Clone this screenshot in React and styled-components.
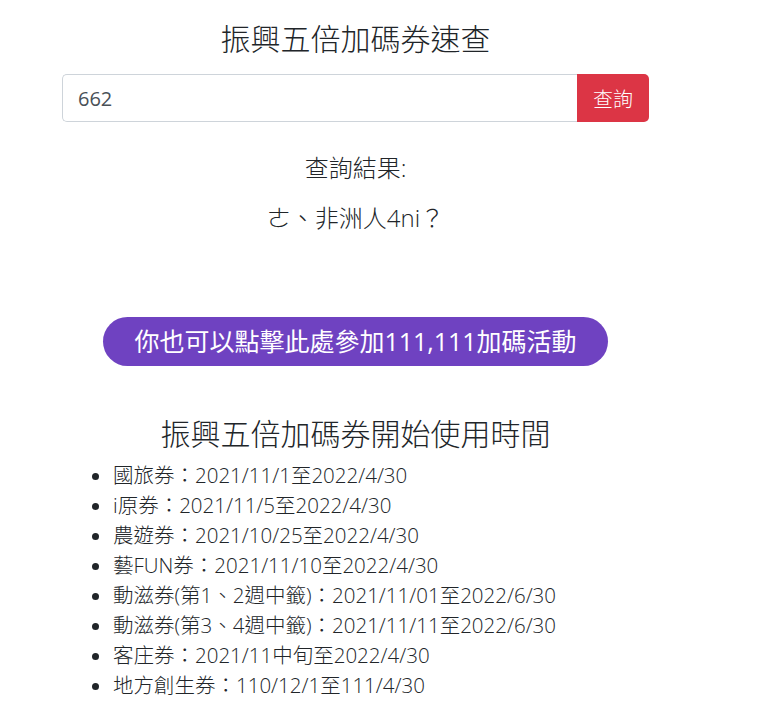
import React, { useState } from 'react';
import styled, { createGlobalStyle } from 'styled-components';

const GlobalStyle = createGlobalStyle`
  html, body {
    margin: 0;
    padding: 0;
    background: #fff;
  }
  body {
    font-family: 'Open Sans', 'Noto Sans CJK TC', sans-serif;
    color: #212529;
  }
`;

const Page = styled.div`
  width: 587px;
  margin-left: 62px;
  padding-top: 19px;
  display: flex;
  flex-direction: column;
`;

const Title = styled.h3`
  margin: 0;
  font-size: 30px;
  font-weight: 300;
  line-height: 36px;
  text-align: center;
  font-family: 'Noto Sans CJK TC', sans-serif;
`;

const SearchGroup = styled.div`
  display: flex;
  margin-top: 19px;
  height: 48px;
`;

const SearchInput = styled.input`
  flex: 1;
  min-width: 0;
  box-sizing: border-box;
  height: 48px;
  padding: 0 15px;
  font-size: 20px;
  font-family: 'Open Sans', sans-serif;
  color: #495057;
  border: 1px solid #ced4da;
  border-right: none;
  border-radius: 5px 0 0 5px;
  outline: none;
`;

const SearchButton = styled.button`
  width: 72px;
  height: 48px;
  border: none;
  border-radius: 0 5px 5px 0;
  background: #dc3545;
  color: #fff;
  font-size: 20px;
  font-family: 'Noto Sans CJK TC', sans-serif;
  font-weight: 300;
  cursor: pointer;
`;

const ResultLine = styled.p`
  margin: ${({ $gap }) => $gap}px 0 0;
  font-size: 24px;
  line-height: 36px;
  font-weight: 300;
  text-align: center;
  font-family: 'Open Sans', 'Noto Sans CJK TC', sans-serif;
`;

const PromoRow = styled.div`
  display: flex;
  justify-content: center;
  margin-top: 81px;
`;

const PromoButton = styled.a`
  display: inline-block;
  box-sizing: border-box;
  width: 505px;
  height: 49px;
  line-height: 49px;
  border-radius: 25px;
  background: #6f42c1;
  color: #fff;
  font-size: 25px;
  text-align: center;
  text-decoration: none;
  font-family: 'Open Sans', 'Noto Sans CJK TC', sans-serif;
  white-space: nowrap;
  cursor: pointer;
`;

const SectionTitle = styled.h3`
  margin: 48px 0 0;
  font-size: 30px;
  font-weight: 300;
  line-height: 36px;
  text-align: center;
  font-family: 'Noto Sans CJK TC', sans-serif;
`;

const DateList = styled.ul`
  margin: 10px 0 0;
  padding-left: 51px;
  list-style: disc;
`;

const DateItem = styled.li`
  font-size: 20.5px;
  line-height: 30px;
  font-weight: 300;
  font-family: 'Open Sans', 'Noto Sans CJK TC', sans-serif;
`;

const schedule = [
  '國旅券：2021/11/1至2022/4/30',
  'i原券：2021/11/5至2022/4/30',
  '農遊券：2021/10/25至2022/4/30',
  '藝FUN券：2021/11/10至2022/4/30',
  '動滋券(第1、2週中籤)：2021/11/01至2022/6/30',
  '動滋券(第3、4週中籤)：2021/11/11至2022/6/30',
  '客庄券：2021/11中旬至2022/4/30',
  '地方創生券：110/12/1至111/4/30',
];

export default function App() {
  const [code, setCode] = useState('662');

  return (
    <>
      <GlobalStyle />
      <Page>
        <Title>振興五倍加碼券速查</Title>
        <SearchGroup>
          <SearchInput value={code} onChange={(e) => setCode(e.target.value)} />
          <SearchButton>查詢</SearchButton>
        </SearchGroup>
        <ResultLine $gap={28}>查詢結果:</ResultLine>
        <ResultLine $gap={14}>ㄜ、非洲人4ni？</ResultLine>
        <PromoRow>
          <PromoButton>你也可以點擊此處參加111,111加碼活動</PromoButton>
        </PromoRow>
        <SectionTitle>振興五倍加碼券開始使用時間</SectionTitle>
        <DateList>
          {schedule.map((line) => (
            <DateItem key={line}>{line}</DateItem>
          ))}
        </DateList>
      </Page>
    </>
  );
}
